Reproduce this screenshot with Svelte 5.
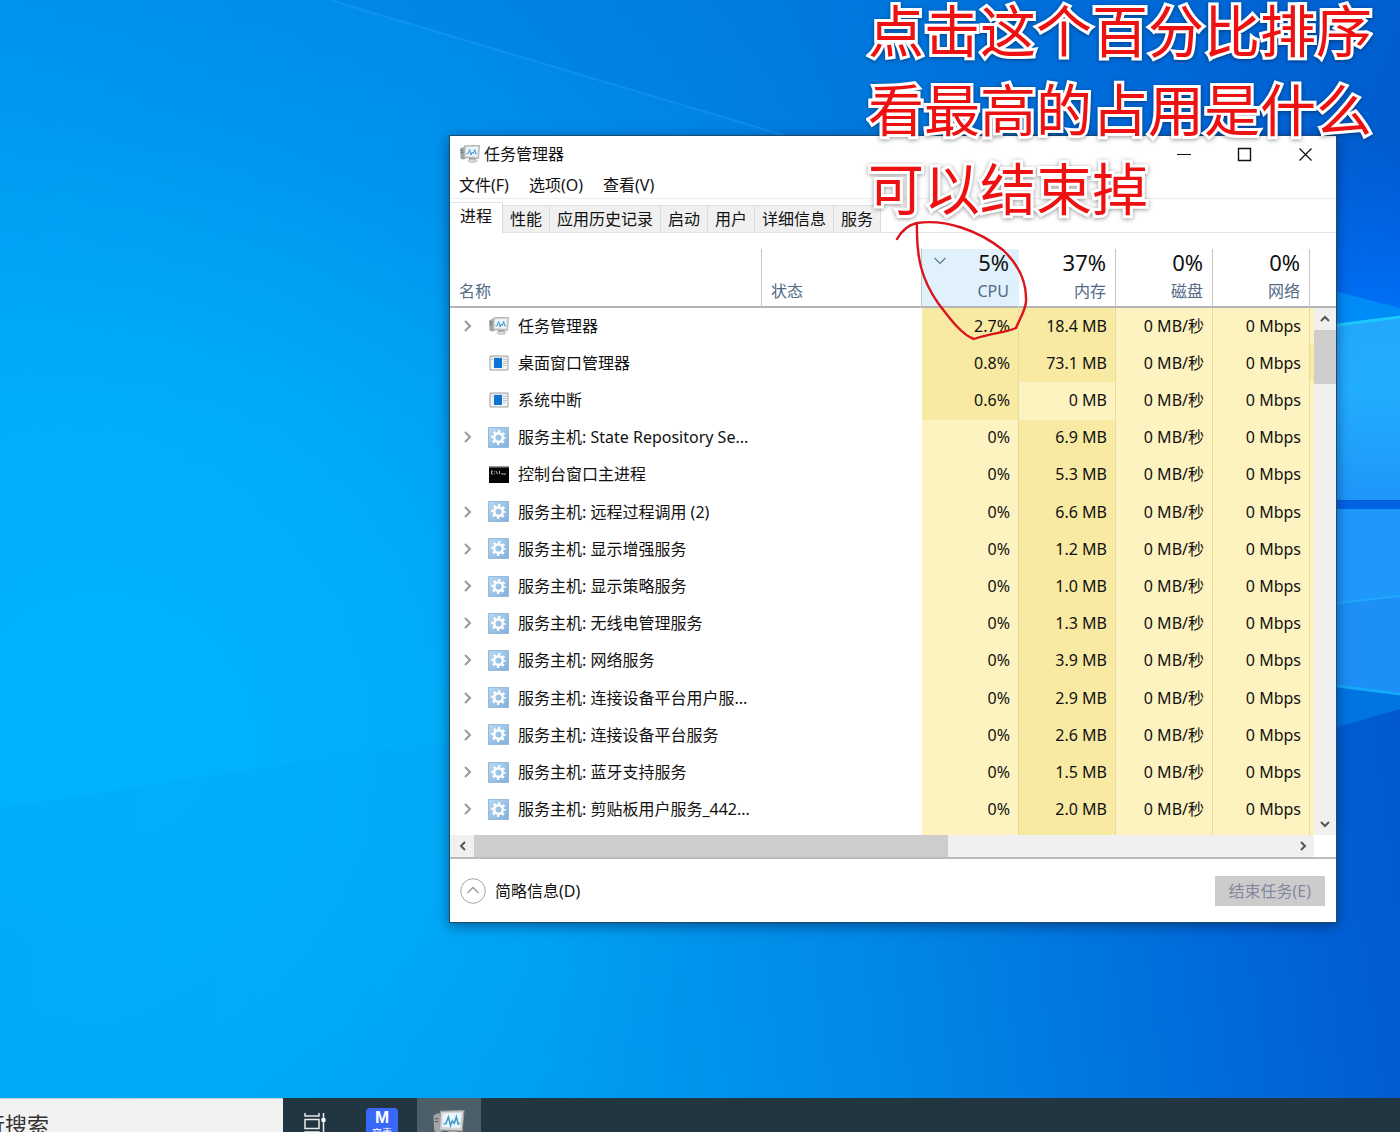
<script>
	const menus = ['文件(F)', '选项(O)', '查看(V)'];
	const tabs = ['进程', '性能', '应用历史记录', '启动', '用户', '详细信息', '服务'];

	const columns = [
		{ usage: '5%', label: 'CPU', sorted: true },
		{ usage: '37%', label: '内存' },
		{ usage: '0%', label: '磁盘' },
		{ usage: '0%', label: '网络' }
	];

	const processes = [
		{ name: '任务管理器', icon: 'monitor', group: true, cpu: '2.7%', mem: '18.4 MB' },
		{ name: '桌面窗口管理器', icon: 'window', cpu: '0.8%', mem: '73.1 MB' },
		{ name: '系统中断', icon: 'window', cpu: '0.6%', mem: '0 MB' },
		{ name: '服务主机: State Repository Se...', icon: 'gear', group: true, cpu: '0%', mem: '6.9 MB' },
		{ name: '控制台窗口主进程', icon: 'console', cpu: '0%', mem: '5.3 MB' },
		{ name: '服务主机: 远程过程调用 (2)', icon: 'gear', group: true, cpu: '0%', mem: '6.6 MB' },
		{ name: '服务主机: 显示增强服务', icon: 'gear', group: true, cpu: '0%', mem: '1.2 MB' },
		{ name: '服务主机: 显示策略服务', icon: 'gear', group: true, cpu: '0%', mem: '1.0 MB' },
		{ name: '服务主机: 无线电管理服务', icon: 'gear', group: true, cpu: '0%', mem: '1.3 MB' },
		{ name: '服务主机: 网络服务', icon: 'gear', group: true, cpu: '0%', mem: '3.9 MB' },
		{ name: '服务主机: 连接设备平台用户服...', icon: 'gear', group: true, cpu: '0%', mem: '2.9 MB' },
		{ name: '服务主机: 连接设备平台服务', icon: 'gear', group: true, cpu: '0%', mem: '2.6 MB' },
		{ name: '服务主机: 蓝牙支持服务', icon: 'gear', group: true, cpu: '0%', mem: '1.5 MB' },
		{ name: '服务主机: 剪贴板用户服务_442...', icon: 'gear', group: true, cpu: '0%', mem: '2.0 MB' }
	];

	const notes = ['点击这个百分比排序', '看最高的占用是什么', '可以结束掉'];

	let activeTab = $state('进程');

	// anything above zero gets the darker heat colour
	function isHot(value) {
		return parseFloat(value) > 0;
	}
</script>

{#snippet monitorIcon()}
	<svg class="monitor-icon" viewBox="0 0 20 18" aria-hidden="true">
		<path d="M0 3.5 3 2 5.5 3v11l-3 .5-2-1z" fill="#a4a5a6" />
		<path d="M.8 5.500h2.400M.8 7.500h2.400" stroke="#666" stroke-width="0.8" />
		<path d="M4.500.8 19.600.3 18.500 13.500 4 12.800z" fill="#d2d3d4" stroke="#9c9d9f" stroke-width="0.7" />
		<path d="M6 2.200 18 1.800 17.200 11.500 5.600 11z" fill="#eaf6fc" />
		<path d="M6.500 8.800H8l1.600-4.300 1.400 5.500 1.200-3 1.200 1.600 1.300-4.100 1.200 4.500 1-.6" fill="none" stroke="#3f9bc8" stroke-width="1" />
		<path d="M9 13h6l1 2.500H9z" fill="#8e8e8e" />
		<ellipse cx="12.500" cy="15.700" rx="4.500" ry="1.800" fill="#d5d5d5" stroke="#aaa" stroke-width="0.5" />
	</svg>
{/snippet}

{#snippet chevron(d, size)}
	<svg class="chevron" width={size} height={size} viewBox="0 0 12 12" aria-hidden="true">
		<path {d} fill="none" stroke="currentColor" stroke-width="2" />
	</svg>
{/snippet}

{#snippet processIcon(kind)}
	{#if kind === 'monitor'}
		{@render monitorIcon()}
	{:else if kind === 'window'}
		<svg width="20" height="16" viewBox="0 0 20 16" aria-hidden="true">
			<path d="M1 1h18v14H1z" fill="#f4f4f4" stroke="#9ba0a3" />
			<path d="M1.5 1.5h17v1h-17z" fill="#c5cbcf" />
			<path d="M5 3h8v10H5z" fill="#0b74d4" />
			<path d="M14 4.5h4M14 6.5h4M14 8.5h4M14 10.5h2.5M2 4.5h2" stroke="#b3b7ba" stroke-width="0.8" />
		</svg>
	{:else if kind === 'console'}
		<svg width="20" height="17" viewBox="0 0 20 17" aria-hidden="true">
			<path d="M0 0h20v17H0z" fill="#050505" />
			<path d="M0 0h20v1.500H0z" fill="#999" />
			<path d="M4 5H2.5v3H4M5.5 5.5v.8M5.5 7.4v.8M7 5l1.6 3.2M10.5 5v3M12 8h5" fill="none" stroke="#ddd" stroke-width="0.8" />
		</svg>
	{:else}
		<svg width="21" height="21" viewBox="0 0 21 21" aria-hidden="true">
			<defs>
				<linearGradient id="gear-bg" x1="0" y1="0" x2="1" y2="1">
					<stop offset="0" stop-color="#b9d9f2" />
					<stop offset="1" stop-color="#80aedb" />
				</linearGradient>
			</defs>
			<path d="M.5.5h20v20H.5z" fill="url(#gear-bg)" stroke="#94badd" />
			<circle cx="10.5" cy="10.5" r="4.3" fill="none" stroke="#fff" stroke-width="2.4" />
			<circle cx="10.5" cy="10.5" r="6.4" fill="none" stroke="#fff" stroke-width="2" stroke-dasharray="2.5 2.52" stroke-dashoffset="1.2" />
		</svg>
	{/if}
{/snippet}

<div class="desktop">
	<svg class="wallpaper" viewBox="0 0 1400 1132" preserveAspectRatio="none" aria-hidden="true">
		<defs>
			<linearGradient id="sky" x1="0" y1="0.1" x2="1" y2="0">
				<stop offset="0" stop-color="#00a9f9" />
				<stop offset="0.3" stop-color="#009df2" />
				<stop offset="0.55" stop-color="#0088e6" />
				<stop offset="0.8" stop-color="#0068da" />
				<stop offset="1" stop-color="#0052c9" />
			</linearGradient>
			<radialGradient id="glow" gradientUnits="userSpaceOnUse" cx="120" cy="740" r="620">
				<stop offset="0" stop-color="#00b4fd" />
				<stop offset="0.5" stop-color="#00b0fb" stop-opacity="0.8" />
				<stop offset="1" stop-color="#00a8f8" stop-opacity="0" />
			</radialGradient>
			<linearGradient id="shade" x1="0" y1="0" x2="0" y2="1">
				<stop offset="0" stop-color="#0072dd" stop-opacity="0.4" />
				<stop offset="1" stop-color="#0072dd" stop-opacity="0" />
			</linearGradient>
			<linearGradient id="beam" x1="0" y1="0" x2="0" y2="1">
				<stop offset="0" stop-color="#006cf8" stop-opacity="0" />
				<stop offset="1" stop-color="#0074fc" stop-opacity="0.9" />
			</linearGradient>
			<linearGradient id="fold" x1="0" y1="0" x2="1" y2="0">
				<stop offset="0" stop-color="#0098ec" stop-opacity="0.18" />
				<stop offset="1" stop-color="#0098ec" stop-opacity="0" />
			</linearGradient>
			<linearGradient id="pane" x1="0" y1="0" x2="0" y2="1">
				<stop offset="0" stop-color="#22a8fc" />
				<stop offset="0.4" stop-color="#22aefe" />
				<stop offset="1" stop-color="#1e96fa" />
			</linearGradient>
		</defs>
		<path d="M0 0h1400v1132H0z" fill="url(#sky)" />
		<path d="M0 0h1400v420H0z" fill="url(#shade)" />
		<path d="M0 0h1400v1132H0z" fill="url(#glow)" />
		<path d="M330 0 800 140H1400V0z" fill="#0060cc" opacity="0.12" />
		<path d="M330 0 800 140" stroke="#39b2ff" stroke-width="2" opacity="0.25" />
		<path d="M0 808 900 670v462H0z" fill="url(#fold)" />
		<path d="M1330 140h70v180h-70z" fill="url(#beam)" />
		<path d="M1330 290 1400 308v22h-70z" fill="#008cf6" />
		<path d="M1330 326 1400 317v183h-70z" fill="url(#pane)" />
		<path d="M1330 326 1400 317" stroke="#1cc8fd" stroke-width="3" />
		<path d="M1330 501h70v8h-70z" fill="#0064e4" />
		<path d="M1330 509h70v186l-70-10z" fill="#1e99fb" />
		<path d="M1330 604 1400 596v98l-70-10z" fill="#1d8ff6" />
		<path d="M1330 604 1400 596" stroke="#20a8fc" stroke-width="2" />
		<path d="M1330 685 1400 694v15l-70 20z" fill="#0075e2" />
		<path d="M1330 685 1400 694" stroke="#14a8f8" stroke-width="3" />
	</svg>

	<main class="workspace">
		<section class="window" aria-label="任务管理器">
			<header class="titlebar">
				{@render monitorIcon()}
				<h1>任务管理器</h1>
				<div class="controls">
					<button aria-label="最小化">
						<svg width="15" height="15" viewBox="0 0 15 15"><path d="M1 7.5h14" stroke="#111" /></svg>
					</button>
					<button aria-label="最大化">
						<svg width="15" height="15" viewBox="0 0 15 15"><path d="M1.5 1.5h12v12h-12z" fill="none" stroke="#111" stroke-width="1.4" /></svg>
					</button>
					<button aria-label="关闭">
						<svg width="15" height="15" viewBox="0 0 15 15"><path d="m1.5 1.5 12 12m0-12-12 12" stroke="#111" stroke-width="1.3" /></svg>
					</button>
				</div>
			</header>

			<nav class="menubar">
				{#each menus as menu}
					<button>{menu}</button>
				{/each}
			</nav>

			<div class="tabs" role="tablist">
				{#each tabs as tab}
					<button
						role="tab"
						class="tab"
						class:active={tab === activeTab}
						aria-selected={tab === activeTab}
						onclick={() => (activeTab = tab)}>{tab}</button
					>
				{/each}
			</div>

			<div class="list">
				<table>
					<colgroup>
						<col class="col-name" />
						<col />
						<col class="col-value" span="4" />
						<col class="col-rest" />
					</colgroup>
					<thead>
						<tr>
							<th class="text-head">名称</th>
							<th class="text-head">状态</th>
							{#each columns as column}
								<th class="value-head" class:sorted={column.sorted}>
									<div class="usage">
										{#if column.sorted}
											<svg class="sort-arrow" width="14" height="10" viewBox="0 0 14 10" aria-hidden="true">
												<path d="m1.5 2 5.5 5.5L12.5 2" fill="none" stroke="#5c7890" stroke-width="1.2" />
											</svg>
										{/if}
										{column.usage}
									</div>
									<div class="label">{column.label}</div>
								</th>
							{/each}
							<th class="rest"></th>
						</tr>
					</thead>
					<tbody>
						{#each processes as process, i}
							<tr>
								<td class="name" colspan="2">
									<div class="name-inner">
										<span class="expander">
											{#if process.group}
												{@render chevron('m3 1 5 5-5 5', 12)}
											{/if}
										</span>
										<span class="icon">{@render processIcon(process.icon)}</span>
										{process.name}
									</div>
								</td>
								<td class="value" class:hot={isHot(process.cpu)}>{process.cpu}</td>
								<td class="value" class:hot={isHot(process.mem)}>{process.mem}</td>
								<td class="value">0 MB/秒</td>
								<td class="value">0 Mbps</td>
								<td class="rest" class:hot={i === 1}></td>
							</tr>
						{/each}
						<tr class="tail">
							<td class="name" colspan="2"></td>
							<td class="value"></td>
							<td class="value hot"></td>
							<td class="value"></td>
							<td class="value"></td>
							<td class="rest"></td>
						</tr>
					</tbody>
				</table>
				<div class="scroll-side">
					<div class="scroll-head"></div>
					<div class="vscroll">
						<button aria-label="向上滚动">{@render chevron('m2 8 4-4 4 4', 12)}</button>
						<div class="thumb"></div>
						<button class="down" aria-label="向下滚动">{@render chevron('m2 4 4 4 4-4', 12)}</button>
					</div>
				</div>
			</div>

			<div class="hscroll">
				<button aria-label="向左滚动">{@render chevron('M8 2 4 6l4 4', 12)}</button>
				<div class="track"><div class="thumb"></div></div>
				<button aria-label="向右滚动">{@render chevron('m4 2 4 4-4 4', 12)}</button>
			</div>

			<footer>
				<button class="fewer">
					<svg width="26" height="26" viewBox="0 0 26 26" aria-hidden="true">
						<circle cx="13" cy="13" r="12.3" fill="none" stroke="#a5a5a5" />
						<path d="m7.5 15 5.5-5.5 5.5 5.5" fill="none" stroke="#999" stroke-width="1.3" />
					</svg>
					简略信息(D)
				</button>
				<button class="end-task" disabled>结束任务(E)</button>
			</footer>
		</section>

		<div class="notes">
			{#each notes as note}
				<p>{note}</p>
			{/each}
		</div>
		<svg class="scribble" width="140" height="126" viewBox="892 217 140 126" aria-hidden="true">
			<path
				d="M897 239C902 230 908 225 917 223C945 219 978 230 1003 250C1020 266 1027 283 1026 302C1025 311 1020 318 1016 328C1005 333 990 333 974 339C962 335 951 320 938 303C922 280 916 258 917 223"
				fill="none"
				stroke="#d9141b"
				stroke-width="2.4"
				stroke-linecap="round"
				stroke-linejoin="round"
			/>
		</svg>
	</main>

	<div class="taskbar">
		<input class="search" type="text" value="行搜索" aria-label="搜索" />
		<button class="task" aria-label="任务视图">
			<svg width="24" height="24" viewBox="0 0 24 24" aria-hidden="true">
				<path d="M2 1v3h14V1M2 7.5h14v9H2zM2 23v-3h14v3M20.5 1v22" fill="none" stroke="#e8eaeb" stroke-width="1.5" />
				<circle cx="20.5" cy="8" r="2.3" fill="#fff" />
			</svg>
		</button>
		<button class="task" aria-label="M">
			<span class="m-logo"><b>M</b><small>容素</small></span>
		</button>
		<button class="task running" aria-label="任务管理器">{@render monitorIcon()}</button>
	</div>
</div>

<style>
	:global(body) {
		margin: 0;
	}

	.desktop {
		position: relative;
		display: flex;
		flex-direction: column;
		min-height: 100vh;
		overflow: hidden;
		background: #0090ec;
		color: #111;
		font-family: 'Noto Sans', 'Noto Sans CJK SC', sans-serif;
		font-size: 16px;
		line-height: 24px;
	}

	.wallpaper {
		position: absolute;
		inset: 0;
		width: 100%;
		height: 100%;
	}

	button {
		padding: 0;
		border: none;
		background: none;
		color: inherit;
		font: inherit;
	}

	svg {
		display: block;
	}

	.workspace {
		position: relative;
		flex: 1;
		padding: 135px 63px 173px 449px;
	}

	/* window */
	.window {
		background: #fff;
		border: 1px solid #1d4a70;
		box-shadow: 0 3px 12px rgba(0, 20, 60, 0.5);
	}

	.titlebar {
		display: flex;
		align-items: center;
		height: 36px;
		padding-left: 10px;
	}

	.monitor-icon {
		width: 20px;
		height: 18px;
	}

	h1 {
		flex: 1;
		margin: 0 0 0 4px;
		font-size: 16px;
		font-weight: 400;
	}

	.controls {
		display: flex;
	}

	.controls button {
		display: flex;
		align-items: center;
		justify-content: center;
		width: 61px;
		height: 36px;
	}

	.menubar {
		display: flex;
		gap: 20px;
		height: 26px;
		padding-left: 9px;
		border-bottom: 1px solid #eee;
	}

	.tabs {
		display: flex;
		align-items: flex-end;
		height: 33px;
		border-bottom: 1px solid #e2e2e2;
	}

	.tab {
		height: 27px;
		padding: 0 7px;
		border-top: 1px solid #e2e2e2;
		border-right: 1px solid #dcdcdc;
		background: #f0f0f0;
	}

	.tab.active {
		height: 31px;
		padding: 0 10px 4px;
		background: #fff;
		margin-bottom: -1px;
	}

	/* process table */
	.list {
		display: flex;
		padding-top: 16px;
	}

	table {
		flex: 1;
		height: 586px;
		border-collapse: separate;
		border-spacing: 0;
		table-layout: fixed;
	}

	.col-name {
		width: 312px;
	}

	.col-value {
		width: 97px;
	}

	.col-rest {
		width: 4px;
	}

	th,
	td {
		box-sizing: border-box;
		padding: 0;
		font-weight: 400;
	}

	th {
		height: 59px;
		border-right: 1px solid #c4c4c4;
		border-bottom: 2px solid #b4b4b4;
		color: #526a86;
		vertical-align: bottom;
	}

	th.rest {
		border-right: none;
	}

	.text-head {
		padding: 0 9px 3px;
		text-align: left;
	}

	.value-head {
		padding: 0 9px 3px;
		text-align: right;
	}

	.sorted {
		background: #e1f1fc;
		border-right-color: #e1f1fc;
	}

	.usage {
		display: flex;
		justify-content: flex-end;
		height: 30px;
		color: #111;
		font-size: 22px;
		line-height: 26px;
	}

	.sort-arrow {
		margin: 7px auto 0 2px;
	}

	td {
		padding-bottom: 2px;
	}

	.name-inner {
		display: flex;
		align-items: center;
		white-space: nowrap;
	}

	.expander {
		width: 26px;
		padding-left: 12px;
		color: #999;
	}

	.icon {
		display: flex;
		justify-content: center;
		width: 21px;
		margin-right: 9px;
	}

	.value {
		padding-right: 8px;
		border-right: 1px solid #e8dc9c;
		background: #fdf3c0;
		text-align: right;
		white-space: nowrap;
	}

	td.rest {
		background: #fdf3c0;
	}

	td.hot {
		background: #f8eaa3;
	}

	.tail td {
		height: 6px;
	}

	/* scrollbars */
	.scroll-side {
		display: flex;
		flex-direction: column;
		width: 22px;
	}

	.scroll-head {
		height: 57px;
		border-bottom: 2px solid #b4b4b4;
	}

	.vscroll {
		flex: 1;
		display: flex;
		flex-direction: column;
		background: #f0f0f0;
		color: #555;
	}

	.vscroll button,
	.hscroll button {
		display: flex;
		align-items: center;
		justify-content: center;
		width: 22px;
		height: 22px;
	}

	.vscroll .thumb {
		height: 54px;
		background: #cdcdcd;
	}

	.down {
		margin-top: auto;
	}

	.hscroll {
		display: flex;
		margin-right: 22px;
		padding-left: 2px;
		background: #f0f0f0;
		color: #555;
	}

	.track {
		flex: 1;
	}

	.hscroll .thumb {
		width: 58%;
		height: 22px;
		background: #cdcdcd;
	}

	footer {
		display: flex;
		align-items: center;
		justify-content: space-between;
		height: 63px;
		padding: 0 11px 0 10px;
		border-top: 2px solid #bcbcbc;
	}

	.fewer {
		display: flex;
		align-items: center;
		gap: 9px;
	}

	.end-task {
		height: 30px;
		padding: 0 14px;
		background: #ccc;
		color: #8587a0;
	}

	/* hand-made notes over the screen */
	.notes {
		position: absolute;
		top: 0;
		left: 868px;
		display: grid;
		gap: 23px;
		color: #ee1111;
		font-family: 'Noto Sans CJK SC', sans-serif;
		font-size: 56px;
		font-weight: 400;
		line-height: 56px;
		white-space: nowrap;
		-webkit-text-stroke: 6px #fff;
		paint-order: stroke fill;
		filter: drop-shadow(0 1px 2px rgba(0, 0, 0, 0.4));
	}

	.notes p {
		margin: 0;
	}

	.scribble {
		position: absolute;
		top: 217px;
		left: 892px;
	}

	/* taskbar */
	.taskbar {
		position: relative;
		display: flex;
		height: 34px;
		overflow: hidden;
		background: #213641;
	}

	.search {
		box-sizing: border-box;
		width: 300px;
		height: 48px;
		margin-left: -17px;
		padding: 0;
		border: none;
		border-top: 1px solid #b9cdd6;
		background: #f2f2f2;
		color: #333;
		font: inherit;
		font-size: 22px;
	}

	.task {
		display: flex;
		align-items: center;
		justify-content: center;
		width: 64px;
		height: 52px;
		margin-right: 3px;
	}

	.m-logo {
		display: flex;
		flex-direction: column;
		align-items: center;
		width: 32px;
		height: 32px;
		border-radius: 4px;
		background: #3a68f6;
		color: #fff;
	}

	.m-logo b {
		font-family: 'Liberation Sans', sans-serif;
		font-size: 17px;
		line-height: 20px;
	}

	.m-logo small {
		font-size: 10px;
		line-height: 10px;
	}

	.running {
		background: #4c5f69;
	}

	.running .monitor-icon {
		width: 32px;
		height: 28px;
	}
</style>
